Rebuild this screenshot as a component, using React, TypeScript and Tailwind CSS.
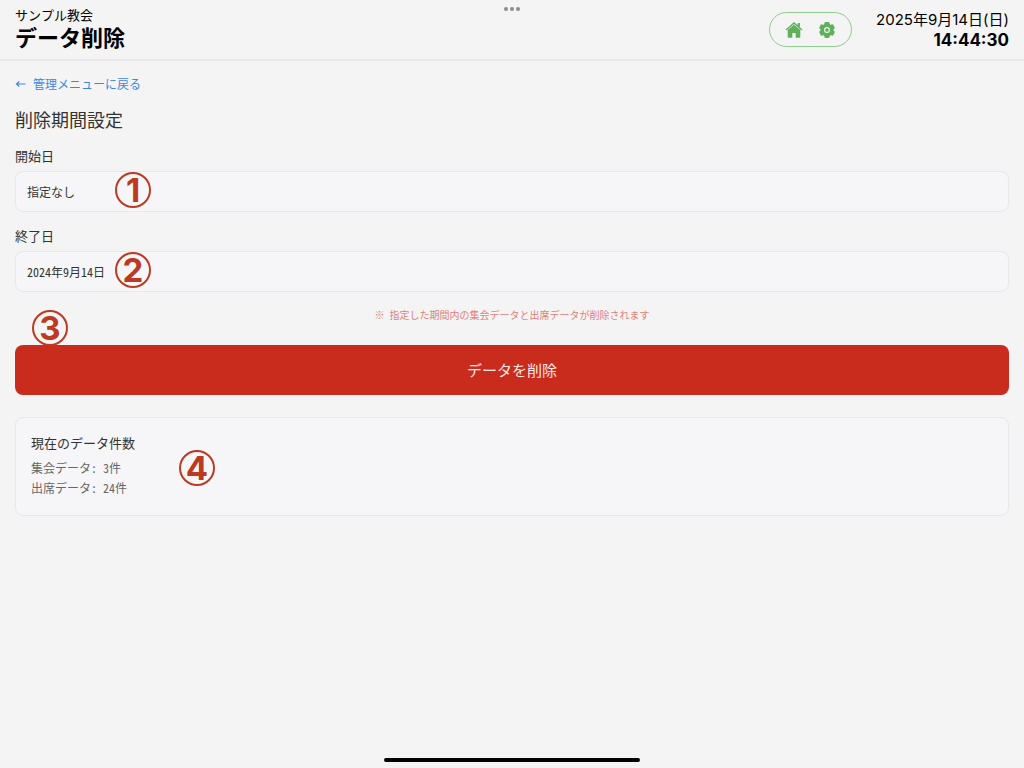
import { useState, type ReactNode } from "react";

function HomeIcon() {
  return (
    <svg viewBox="0 0 18 18" className="size-[18px]" fill="currentColor" aria-hidden="true">
      <path d="M9 1.1 0.9 8.2a.6.6 0 0 0 .8.95L9 2.9l7.3 6.25a.6.6 0 0 0 .8-.95L14.9 6.2V2h-2.2v2.3z" />
      <path d="M9 3.7 2.7 9.1v6.7c0 .5.4.9.9.9h3.700v-4.700h3.4v4.700h3.700c.5 0 .9-.4.9-.9V9.100z" />
    </svg>
  );
}

function GearIcon() {
  return (
    <svg viewBox="0 0 18 18" className="size-[18px]" aria-hidden="true">
      <g fill="currentColor">
        <circle cx="9" cy="9" r="6.5" />
        <rect x="6.4" y="1" width="5.200" height="16" rx="1.3" />
        <rect x="6.4" y="1" width="5.200" height="16" rx="1.3" transform="rotate(60 9 9)" />
        <rect x="6.4" y="1" width="5.200" height="16" rx="1.3" transform="rotate(120 9 9)" />
      </g>
      <circle cx="9" cy="9" r="2.4" fill="none" stroke="#f4f4f4" strokeWidth="1.1" />
    </svg>
  );
}

function Marker({ children, className }: { children: ReactNode; className: string }) {
  return (
    <span
      className={
        "pointer-events-none absolute flex size-9 items-center justify-center rounded-full border-2 border-[#bd3a22] font-['Inter',sans-serif] text-[33px] leading-none font-bold text-[#bd3a22] " +
        className
      }
    >
      {children}
    </span>
  );
}

function DateField({ id, label, initial, marker }: { id: string; label: string; initial: string; marker: string }) {
  const [value, setValue] = useState(initial);
  return (
    <div>
      <label htmlFor={id} className="block text-[13px] leading-5 text-[#333]">
        {label}
      </label>
      <div className="relative mt-[5px]">
        <input
          id={id}
          type="text"
          value={value}
          onChange={(e) => setValue(e.target.value)}
          className="block h-[41px] w-full rounded-lg border border-[#e8e8ea] bg-[#f6f6f9] px-[11px] text-xs text-[#333]"
        />
        <Marker className="top-px left-[100px]">{marker}</Marker>
      </div>
    </div>
  );
}

export default function App() {
  return (
    <div className="flex min-h-screen flex-col bg-[#f4f4f4] font-['Noto_Sans_Mono_CJK_JP','Noto_Sans_CJK_JP',sans-serif] text-[#333]">
      <header className="relative flex h-[61px] items-center justify-between border-b-2 border-[#e8e8e8] px-[15px] text-black">
        <div className="pb-[3px]">
          <p className="text-[13px] leading-4">サンプル教会</p>
          <h1 className="text-[22px] leading-[26px] font-bold">データ削除</h1>
        </div>
        <div className="absolute top-[7px] left-1/2 flex -translate-x-1/2 gap-0.5">
          <span className="size-1 rounded-full bg-[#8c8c8c]" />
          <span className="size-1 rounded-full bg-[#8c8c8c]" />
          <span className="size-1 rounded-full bg-[#8c8c8c]" />
        </div>
        <div className="flex items-center gap-6">
          <nav className="flex h-[35px] items-center gap-[15px] rounded-full border border-[#8fce8f] px-[15px] text-[#5fb05c]">
            <button type="button" aria-label="ホーム">
              <HomeIcon />
            </button>
            <button type="button" aria-label="設定">
              <GearIcon />
            </button>
          </nav>
          <div className="text-right font-['Inter','Noto_Sans_CJK_JP',sans-serif]">
            <p className="text-[15px] leading-5">2025年9月14日(日)</p>
            <p className="text-[17px] leading-5 font-bold">14:44:30</p>
          </div>
        </div>
      </header>

      <main className="flex flex-col px-[15px] pt-[13px]">
        <a href="#menu" className="flex items-center gap-1.5 self-start text-xs leading-5 text-[#3f85e6]">
          <svg viewBox="0 0 12 12" className="size-3" fill="none" stroke="currentColor" strokeWidth="1.2" aria-hidden="true">
            <path d="M10.500 6H1.500M4.300 3.500 1.500 6l2.800 2.500" />
          </svg>
          管理メニューに戻る
        </a>
        <h2 className="mt-[11px] text-lg leading-7">削除期間設定</h2>
        <div className="mt-[13px] flex flex-col gap-[14px]">
          <DateField id="start" label="開始日" initial="指定なし" marker="1" />
          <DateField id="end" label="終了日" initial="2024年9月14日" marker="2" />
        </div>
        <p className="mt-[13px] text-center text-[10px] leading-5 text-[#e57f7a]">
          ※ 指定した期間内の集会データと出席データが削除されます
        </p>
        <div className="relative mt-5">
          <button type="button" className="block h-[50px] w-full rounded-lg bg-[#c92b1d] text-[15px] text-[#fbe9e7]">
            データを削除
          </button>
          <Marker className="-top-[35px] left-[17px]">3</Marker>
        </div>
        <section className="relative mt-[22px] rounded-lg border border-[#e8e8ea] bg-[#f6f6f9] px-[15px] pt-[15px] pb-[17px]">
          <h3 className="text-[13px] leading-5">現在のデータ件数</h3>
          <p className="mt-[5px] text-xs leading-5 text-[#666]">集会データ: 3件</p>
          <p className="text-xs leading-5 text-[#666]">出席データ: 24件</p>
          <Marker className="top-8 left-[163px]">4</Marker>
        </section>
      </main>

      <div className="mt-auto mb-[6px] h-1 w-1/4 self-center rounded-full bg-black" />
    </div>
  );
}
